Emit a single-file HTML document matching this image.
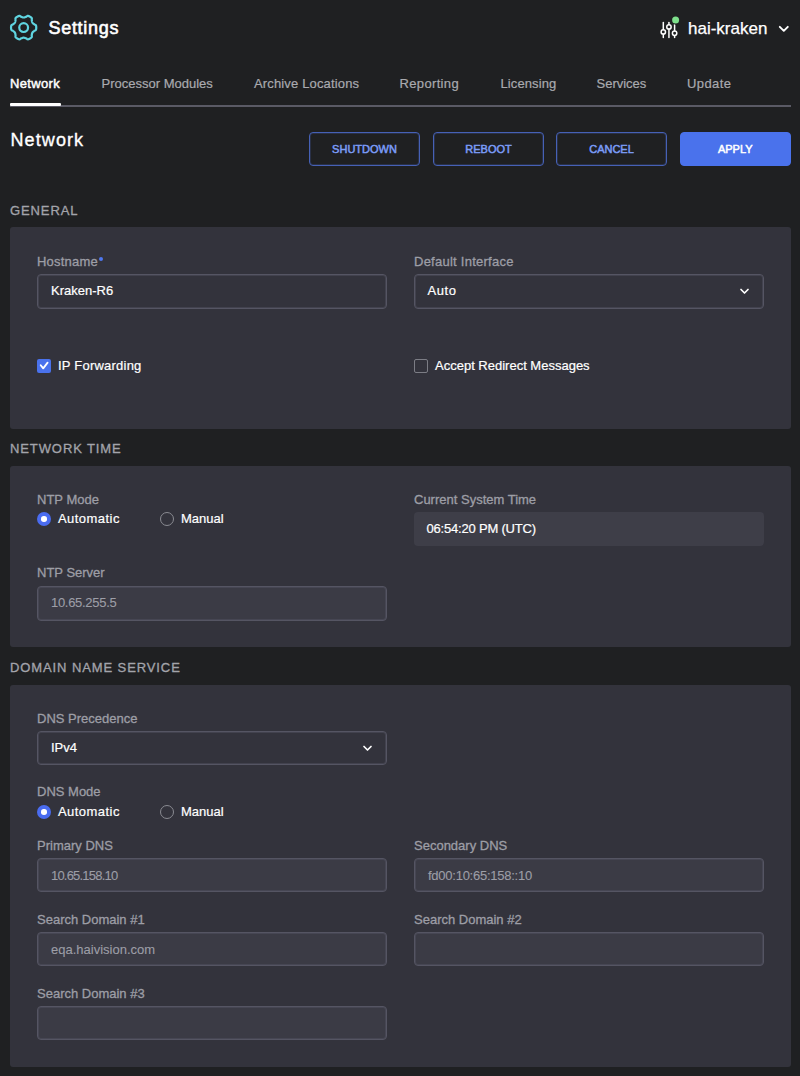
<!DOCTYPE html>
<html><head><meta charset="utf-8">
<style>
*{box-sizing:border-box;margin:0;padding:0}
html,body{width:800px;height:1076px;overflow:hidden;background:#1f2022;font-family:"Liberation Sans",sans-serif;color:#fff}
.a{-webkit-text-stroke:0.2px currentColor}
.a{position:absolute;white-space:nowrap;line-height:1}
.t13{font-size:13px}
.title{left:48.5px;top:18.7px;font-size:18px;letter-spacing:0.7px;color:#fff;-webkit-text-stroke:0.6px #fff}
.tab{top:76.7px;font-size:13px;color:#a9aaaf}
.tab.act{color:#fff;-webkit-text-stroke:0.45px #fff;letter-spacing:0.35px}
.underline{left:10px;top:103px;width:51px;height:3px;background:#fff;border-radius:1px}
.divider{left:10px;top:105px;width:780.5px;height:2px;background:#5a5a65}
.h1{left:10.5px;top:130.5px;font-size:18px;letter-spacing:1.1px;color:#fff;-webkit-text-stroke:0.35px #fff}
.btn{top:132px;width:111px;height:34px;border:1px solid #4661b6;box-shadow:inset 0 0 0 1px rgba(70,97,182,0.25);border-radius:4px;color:#7b9cf7;font-size:11px;text-align:center;line-height:32px;letter-spacing:0px;-webkit-text-stroke:0.5px currentColor}
.btn.fill{background:#4a72ec;border-color:#4a72ec;box-shadow:none;color:#fff}
.sec{left:10px;font-size:13px;color:#a3a4ab;letter-spacing:0.9px;-webkit-text-stroke:0.3px currentColor}
.panel{left:10px;width:780.5px;background:#33333c;border-radius:3px}
.lbl{font-size:13px;color:#9d9ea6;-webkit-text-stroke:0.3px currentColor}
.inp{position:absolute;width:350px;height:34.5px;border:1px solid #555563;box-shadow:inset 0 0 0 1px rgba(85,85,99,0.45);border-radius:4px;background:#33333c}
.inp.ro{background:#3b3b45;border-color:#555563}
.val{font-size:13px;color:#fff}
.val.dis{color:#9d9ea7;-webkit-text-stroke:0.1px currentColor}
.txt{font-size:13px;color:#fff}
.chev{position:absolute;width:9px;height:6px}
.cb{position:absolute;width:14px;height:14px;border-radius:2px}
.radio{position:absolute;width:14px;height:14px;border-radius:50%}
</style></head><body>
<!-- header -->
<svg class="a" style="left:0;top:0" width="60" height="60" viewBox="0 0 60 60" id="gear"><path d="M36.25 27.60L36.24 28.04L36.22 28.48L36.17 28.92L36.09 29.35L35.95 29.77L35.65 30.15L35.03 30.44L34.43 30.69L34.08 30.99L33.73 31.27L33.40 31.54L33.09 31.81L32.82 32.07L32.59 32.35L32.40 32.65L32.24 32.97L32.11 33.31L32.01 33.68L31.93 34.07L31.87 34.49L31.80 34.94L31.72 35.39L31.80 36.04L31.86 36.72L31.68 37.17L31.38 37.50L31.05 37.78L30.69 38.04L30.33 38.28L29.95 38.51L29.56 38.72L29.17 38.92L28.77 39.10L28.36 39.25L27.92 39.33L27.44 39.27L26.88 38.88L26.36 38.49L25.93 38.32L25.51 38.16L25.11 38.01L24.73 37.88L24.36 37.78L24.00 37.72L23.65 37.70L23.30 37.72L22.94 37.78L22.57 37.88L22.19 38.01L21.79 38.16L21.37 38.32L20.94 38.49L20.42 38.88L19.86 39.27L19.38 39.33L18.94 39.25L18.53 39.10L18.13 38.92L17.74 38.72L17.35 38.51L16.97 38.28L16.61 38.04L16.25 37.78L15.92 37.50L15.62 37.17L15.44 36.72L15.50 36.04L15.58 35.39L15.50 34.94L15.43 34.49L15.37 34.07L15.29 33.68L15.19 33.31L15.06 32.97L14.90 32.65L14.71 32.35L14.48 32.07L14.21 31.81L13.90 31.54L13.57 31.27L13.22 30.99L12.87 30.69L12.27 30.44L11.65 30.15L11.35 29.77L11.21 29.35L11.13 28.92L11.08 28.48L11.06 28.04L11.05 27.60L11.06 27.16L11.08 26.72L11.13 26.28L11.21 25.85L11.35 25.43L11.65 25.05L12.27 24.76L12.87 24.51L13.22 24.21L13.57 23.93L13.90 23.66L14.21 23.39L14.48 23.13L14.71 22.85L14.90 22.55L15.06 22.23L15.19 21.89L15.29 21.52L15.37 21.13L15.43 20.71L15.50 20.26L15.58 19.81L15.50 19.16L15.44 18.48L15.62 18.03L15.92 17.70L16.25 17.42L16.61 17.16L16.97 16.92L17.35 16.69L17.74 16.48L18.13 16.28L18.53 16.10L18.94 15.95L19.38 15.87L19.86 15.93L20.42 16.32L20.94 16.71L21.37 16.88L21.79 17.04L22.19 17.19L22.57 17.32L22.94 17.42L23.30 17.48L23.65 17.50L24.00 17.48L24.36 17.42L24.73 17.32L25.11 17.19L25.51 17.04L25.93 16.88L26.36 16.71L26.88 16.32L27.44 15.93L27.92 15.87L28.36 15.95L28.77 16.10L29.17 16.28L29.56 16.48L29.95 16.69L30.33 16.92L30.69 17.16L31.05 17.42L31.38 17.70L31.68 18.03L31.86 18.48L31.80 19.16L31.72 19.81L31.80 20.26L31.87 20.71L31.93 21.13L32.01 21.52L32.11 21.89L32.24 22.23L32.40 22.55L32.59 22.85L32.82 23.13L33.09 23.39L33.40 23.66L33.73 23.93L34.08 24.21L34.43 24.51L35.03 24.76L35.65 25.05L35.95 25.43L36.09 25.85L36.17 26.28L36.22 26.72L36.24 27.16Z" fill="none" stroke="#5fd4e0" stroke-width="2.2" stroke-linejoin="round"/><circle cx="23.65" cy="27.6" r="4.4" fill="none" stroke="#5fd4e0" stroke-width="2.2"/></svg>
<div class="a title">Settings</div>
<svg class="a" style="left:655px;top:10px" width="30" height="35" viewBox="0 0 30 35">
  <g stroke="#fff" stroke-width="1.5" fill="none" stroke-linecap="round">
    <line x1="8.3" y1="12.5" x2="8.3" y2="19.5"/>
    <line x1="8.3" y1="24.5" x2="8.3" y2="27.5"/>
    <circle cx="8.3" cy="21.9" r="2.2"/>
    <line x1="13.95" y1="12.5" x2="13.95" y2="14.5"/>
    <line x1="13.95" y1="19.5" x2="13.95" y2="27.5"/>
    <circle cx="13.95" cy="16.9" r="2.2"/>
    <line x1="19.6" y1="13" x2="19.6" y2="20.8"/>
    <line x1="19.6" y1="25.8" x2="19.6" y2="27.5"/>
    <circle cx="19.6" cy="23.25" r="2.2"/>
  </g>
  <circle cx="20.6" cy="10.1" r="4.6" fill="#1f2022"/>
  <circle cx="20.6" cy="10.1" r="3.5" fill="#7ee08c"/>
</svg>
<div class="a" style="left:688px;top:19.5px;font-size:17px;color:#fff;-webkit-text-stroke:0.25px #fff">hai-kraken</div>
<svg class="a" style="left:777px;top:24px" width="13" height="10" viewBox="0 0 13 10"><path d="M2.8 2.8 L6.8 6.8 L10.8 2.8" stroke="#fff" stroke-width="1.9" fill="none" stroke-linecap="round" stroke-linejoin="round"/></svg>

<!-- tabs -->
<div class="a divider"></div>
<div class="a underline"></div>
<div class="a tab act" style="left:10px">Network</div>
<div class="a tab" style="left:101.5px">Processor Modules</div>
<div class="a tab" style="left:254px;letter-spacing:0.15px">Archive Locations</div>
<div class="a tab" style="left:399.5px;letter-spacing:0.35px">Reporting</div>
<div class="a tab" style="left:500.5px;letter-spacing:0.1px">Licensing</div>
<div class="a tab" style="left:596.5px">Services</div>
<div class="a tab" style="left:687px;letter-spacing:0.4px">Update</div>

<div class="a h1">Network</div>
<div class="a btn" style="left:309px">SHUTDOWN</div>
<div class="a btn" style="left:433px">REBOOT</div>
<div class="a btn" style="left:556px">CANCEL</div>
<div class="a btn fill" style="left:680px;width:110.5px">APPLY</div>

<!-- GENERAL -->
<div class="a sec" style="top:203.8px">GENERAL</div>
<div class="a panel" style="top:227px;height:202px"></div>
<div class="a lbl" style="left:37px;top:254.7px;letter-spacing:0.2px">Hostname</div>
<svg class="a" style="left:98px;top:256px" width="6" height="6"><circle cx="3" cy="2.9" r="2" fill="#4f78f0"/></svg>
<div class="inp" style="left:37px;top:274px"></div>
<div class="a val" style="left:51px;top:284px">Kraken-R6</div>
<div class="a lbl" style="left:414px;top:254.7px;letter-spacing:0.25px">Default Interface</div>
<div class="inp" style="left:413.5px;top:274px"></div>
<div class="a val" style="left:427.5px;top:284px;letter-spacing:0.6px">Auto</div>
<svg class="a" style="left:738px;top:287px" width="13" height="10" viewBox="0 0 13 10"><path d="M3 2.5 L6.5 6 L10 2.5" stroke="#fff" stroke-width="1.7" fill="none" stroke-linecap="round" stroke-linejoin="round"/></svg>
<div class="cb" style="left:37px;top:359px;background:#4a72ec"></div>
<svg class="a" style="left:37px;top:359px" width="14" height="14" viewBox="0 0 14 14"><path d="M3.7 6.3 L6.2 9.4 L10.6 3.6" stroke="#fff" stroke-width="1.8" fill="none" stroke-linecap="round" stroke-linejoin="round"/></svg>
<div class="a txt" style="left:58px;top:358.5px;letter-spacing:0.22px">IP Forwarding</div>
<div class="cb" style="left:414px;top:359px;border:1.5px solid #7c7d85"></div>
<div class="a txt" style="left:435px;top:358.5px">Accept Redirect Messages</div>

<!-- NETWORK TIME -->
<div class="a sec" style="top:442px">NETWORK TIME</div>
<div class="a panel" style="top:466px;height:181px"></div>
<div class="a lbl" style="left:37px;top:492.5px">NTP Mode</div>
<div class="radio" style="left:37px;top:512px;background:#4a6cf0"></div>
<div class="radio" style="left:41.2px;top:516.2px;width:5.6px;height:5.6px;background:#fff"></div>
<div class="a txt" style="left:58px;top:512px;letter-spacing:0.45px">Automatic</div>
<div class="radio" style="left:160px;top:512px;border:1.2px solid #8a8b92"></div>
<div class="a txt" style="left:181px;top:512px">Manual</div>
<div class="a lbl" style="left:414px;top:492.5px">Current System Time</div>
<div class="inp" style="left:414px;top:512.3px;height:34px;border:none;box-shadow:none;background:#3e3e48;width:349.5px"></div>
<div class="a val" style="left:426.5px;top:522.4px;letter-spacing:-0.2px">06:54:20 PM (UTC)</div>
<div class="a lbl" style="left:37px;top:566px">NTP Server</div>
<div class="inp ro" style="left:37px;top:586px"></div>
<div class="a val dis" style="left:51px;top:596px;letter-spacing:-0.3px">10.65.255.5</div>

<!-- DNS -->
<div class="a sec" style="top:660.6px">DOMAIN NAME SERVICE</div>
<div class="a panel" style="top:685px;height:381.5px"></div>
<div class="a lbl" style="left:37px;top:711.5px">DNS Precedence</div>
<div class="inp" style="left:37px;top:731px;height:34px"></div>
<div class="a val" style="left:51px;top:741px">IPv4</div>
<svg class="a" style="left:361px;top:744px" width="13" height="10" viewBox="0 0 13 10"><path d="M3 2.5 L6.5 6 L10 2.5" stroke="#fff" stroke-width="1.7" fill="none" stroke-linecap="round" stroke-linejoin="round"/></svg>
<div class="a lbl" style="left:37px;top:785.2px">DNS Mode</div>
<div class="radio" style="left:37px;top:805px;background:#4a6cf0"></div>
<div class="radio" style="left:41.2px;top:809.2px;width:5.6px;height:5.6px;background:#fff"></div>
<div class="a txt" style="left:58px;top:805px;letter-spacing:0.45px">Automatic</div>
<div class="radio" style="left:160px;top:805px;border:1.2px solid #8a8b92"></div>
<div class="a txt" style="left:181px;top:805px">Manual</div>
<div class="a lbl" style="left:37px;top:838.5px">Primary DNS</div>
<div class="inp ro" style="left:37px;top:858px;height:34px"></div>
<div class="a val dis" style="left:51px;top:869px;letter-spacing:-0.8px">10.65.158.10</div>
<div class="a lbl" style="left:414px;top:838.5px">Secondary DNS</div>
<div class="inp ro" style="left:414px;top:858px;height:34px"></div>
<div class="a val dis" style="left:428px;top:869px;letter-spacing:-0.25px">fd00:10:65:158::10</div>
<div class="a lbl" style="left:37px;top:912.7px">Search Domain #1</div>
<div class="inp ro" style="left:37px;top:932px;height:34px"></div>
<div class="a val dis" style="left:51px;top:942.7px">eqa.haivision.com</div>
<div class="a lbl" style="left:414px;top:912.7px">Search Domain #2</div>
<div class="inp ro" style="left:414px;top:932px;height:34px"></div>
<div class="a lbl" style="left:37px;top:986.5px">Search Domain #3</div>
<div class="inp ro" style="left:37px;top:1005.5px"></div>
</body></html>
